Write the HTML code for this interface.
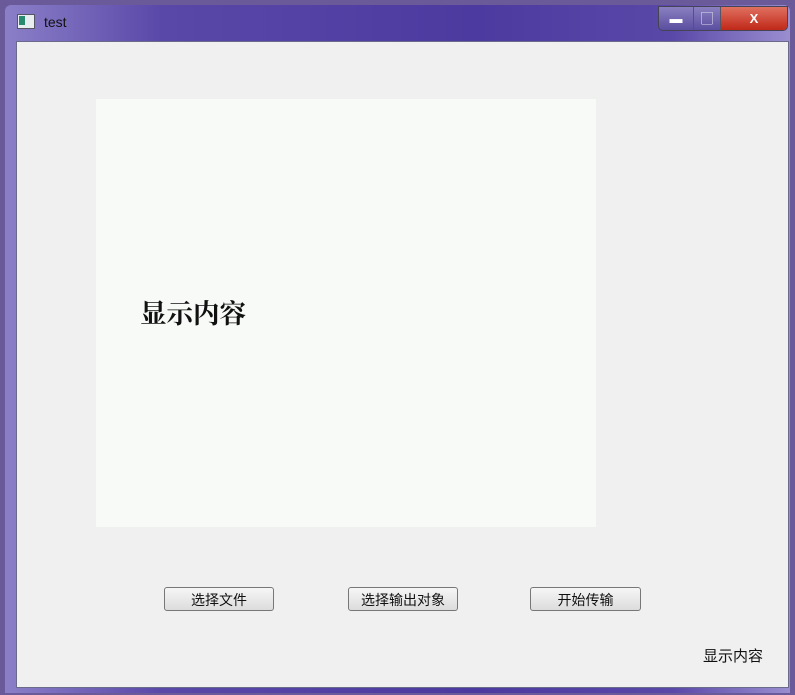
<!DOCTYPE html>
<html><head><meta charset="utf-8"><style>
body{margin:0;width:795px;height:695px;overflow:hidden;background:#6a5a9a;font-family:"Liberation Sans","Noto Sans CJK SC",sans-serif;position:relative}
.frame{position:absolute;left:5px;top:5px;width:785px;height:688px;border-radius:6px 6px 0 0;background:linear-gradient(90deg,#8b7fc8 0%,#5a48a8 20%,#4c3aa0 60%,#5a48a8 85%,#9a8ed0 100%)}
.client{position:absolute;left:16px;top:41px;width:771px;height:645px;background:#f0f0f0;border:1px solid #6a6a8a}
.title{position:absolute;left:44px;top:14px;font-size:14px;color:#111}
.icon{position:absolute;left:17px;top:14px;width:16px;height:13px;background:#e8eef0;border:1px solid #556}
.icon:before{content:"";position:absolute;left:1px;top:1px;width:6px;height:9px;background:#2a8a70}
.btns{position:absolute;left:658px;top:6px;width:128px;height:23px;border:1px solid #445;border-radius:0 0 5px 5px;overflow:hidden;display:flex}
.btns div{height:23px;color:#fff;font-size:13px;text-align:center;line-height:23px;border-right:1px solid #556}
.panel{position:absolute;left:96px;top:99px;width:500px;height:428px;background:#f7faf7}
.big{position:absolute;left:140px;top:292px;font-size:26.5px;font-weight:bold;font-family:"Noto Serif CJK SC",serif;color:#111}
.b{position:absolute;top:587px;width:110px;height:24px;border:1px solid #777;border-radius:3px;background:linear-gradient(#f6f6f6,#dcdcdc);font-size:14px;text-align:center;line-height:24px;color:#111;box-sizing:border-box}
.lbl{position:absolute;left:703px;top:645px;font-size:15px;color:#111}
</style></head><body>
<div class="frame"></div>
<div class="icon"></div><div class="title">test</div>
<div class="btns"><div style="width:34px;background:linear-gradient(#8a80c0,#5a4ea0)">▬</div><div style="width:26px;background:linear-gradient(#8a80c0,#5a4ea0)">▢</div><div style="flex:1;background:linear-gradient(#e07060,#c02818);border:0;font-weight:bold">X</div></div>
<div class="client"></div>
<div class="panel"></div>
<div class="big">显示内容</div>
<div class="b" style="left:164px">选择文件</div>
<div class="b" style="left:348px">选择输出对象</div>
<div class="b" style="left:530px;width:111px">开始传输</div>
<div class="lbl">显示内容</div>
</body></html>
